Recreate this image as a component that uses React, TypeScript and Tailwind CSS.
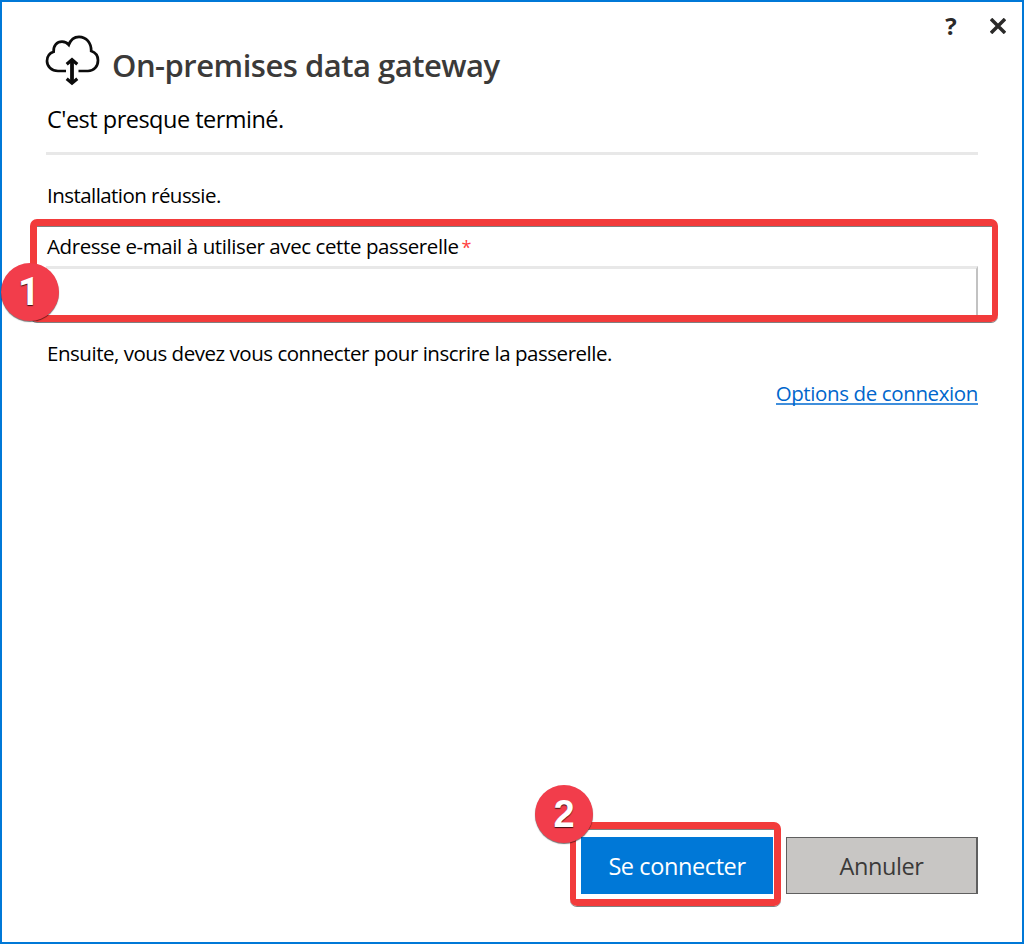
import React from "react";

function CloudIcon() {
  return (
    <svg width="56" height="52" viewBox="45 34 56 52" fill="none" stroke="#0c0c0c" strokeWidth="2.7">
      <path d="M66 71H58C51.5 71 47 66.5 47 61C47 56.5 49.5 53.2 53.6 51.8C53.2 45.5 57 41.7 62 41.7C65 41.7 67.2 42.8 68.8 44.8C70.5 40 74.2 36.8 79 36.8C86.3 36.8 91.4 43 91.2 51C95.5 52.5 98 56 98 60.2C98 66.5 94 71 88 71H78.5" />
      <path d="M72 60.5V82.5" strokeWidth="3.8" />
      <path d="M66.7 64.2L72 59.7L77.3 64.2M66.7 78.8L72 83.2L77.3 78.8" strokeWidth="3.2" />
    </svg>
  );
}

function Badge({ label, className }: { label: string; className: string }) {
  return (
    <span
      className={`absolute flex size-[58px] items-center justify-center rounded-full bg-[#f23d4b] text-[38px] font-bold leading-none text-white shadow-[0_1px_1px_rgba(0,0,0,0.55)] [text-shadow:0_1px_1px_rgba(0,0,0,0.75)] ${className}`}
    >
      {label}
    </span>
  );
}

export default function App() {
  return (
    <div className="flex h-[944px] w-[1024px] flex-col border-2 border-[#0078d7] bg-white font-['Open_Sans',sans-serif] text-[20.5px] text-black">
      <header className="flex h-[90px] pl-[43px] pr-[13px]">
        <div className="pt-8">
          <CloudIcon />
        </div>
        <h1 className="ml-[11px] mt-[43px] h-10 whitespace-nowrap text-[31px] font-semibold leading-10 tracking-[-0.5px] text-[#3b3a39]">
          <span>On-premises data gateway</span>
        </h1>
        <div className="ml-auto flex h-12 items-center gap-[29px] text-[#2b2a29]">
          <button className="h-7 w-[14px] text-[24px] font-bold leading-7">?</button>
          <button className="flex size-[22px] items-center justify-center">
            <svg width="16" height="16" viewBox="0 0 16 16" fill="none" stroke="currentColor" strokeWidth="3.5">
              <path d="M1 1L15 15M15 1L1 15" />
            </svg>
          </button>
        </div>
      </header>

      <main className="flex flex-col">
        <p className="ml-[45px] mt-[11px] h-8 whitespace-nowrap text-[23.5px] leading-8 tracking-[-0.51px]">
          <span>C'est presque terminé.</span>
        </p>
        <hr className="ml-[44px] mr-[44px] mt-[17px] h-[3px] border-0 bg-[#e8e8e8]" />
        <p className="ml-[45px] mt-[26px] h-7 whitespace-nowrap leading-7 tracking-[-0.55px]">
          <span>Installation réussie.</span>
        </p>

        <section className="relative ml-[28px] mt-[10px] h-[103px] w-[968px] rounded-[7px] border-[7px] border-r-[6px] border-[#f23b3b] pl-[9px] pr-[14px] shadow-[0_1px_0_#808080,inset_0_1px_0_#808080]">
          <label className="ml-px mt-[6px] block h-7 whitespace-nowrap leading-7 tracking-[-0.41px]">
            <span>Adresse e-mail à utiliser avec cette passerelle</span>
            <span className="ml-[3px] text-[18px] text-[#ff4040]">*</span>
          </label>
          <input className="mt-[6px] block h-[49px] w-full border-r-2 border-t-[3px] border-r-[#c2c2c2] border-t-[#e8e8e8] bg-white outline-none" />
          <Badge label="1" className="-left-[36px] top-[37px] pr-[2px] font-['Roboto',sans-serif]" />
        </section>

        <p className="ml-[45px] mt-[17px] h-7 whitespace-nowrap leading-7 tracking-[-0.47px]">
          <span>Ensuite, vous devez vous connecter pour inscrire la passerelle.</span>
        </p>
        <div className="mr-[44px] mt-[12px] flex h-7 justify-end">
          <a className="h-[26px] whitespace-nowrap border-b-2 border-[#408fdc] leading-7 tracking-[-0.38px] text-[#0066cc]">
            Options de connexion
          </a>
        </div>
      </main>

      <footer className="mb-[36px] mr-[44px] mt-auto flex items-start justify-end gap-[5px] text-[23.5px]">
        <div className="relative h-[84px] w-[211px] rounded-[7px] border-[7px] border-l-[6px] border-[#f23b3b] pl-[5px] pr-px pt-2 shadow-[0_1px_0_#808080,inset_0_1px_0_#808080]">
          <button className="h-[57px] w-full whitespace-nowrap bg-[#0078d7] pt-[2px] tracking-[-0.4px] text-white">Se connecter</button>
          <Badge label="2" className="-left-[41px] -top-[44px] font-['Liberation_Sans',sans-serif]" />
        </div>
        <button className="mt-[15px] h-[57px] w-[192px] border border-r-2 border-[#5f5f5f] bg-[#c8c6c4] pt-[2px] tracking-[-0.4px] text-[#3b3a39]">
          Annuler
        </button>
      </footer>
    </div>
  );
}
